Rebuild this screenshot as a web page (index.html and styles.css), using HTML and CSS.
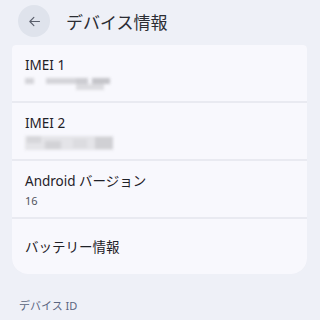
FILE: index.html
```html
<!DOCTYPE html>
<html lang="ja">
<head>
  <meta charset="UTF-8">
  <meta name="viewport" content="width=device-width, initial-scale=1.0">
  <title>デバイス情報</title>
  <link rel="stylesheet" href="styles.css">
</head>
<body>
  <div class="header">
    <div class="back">
      <svg width="15" height="15" viewBox="0 0 24 24"><path d="M20 12H5M11 5.5L4.5 12l6.5 6.5" fill="none" stroke="#5a5f6b" stroke-width="1.8" stroke-linecap="round" stroke-linejoin="round"/></svg>
    </div>
    <h1>デバイス情報</h1>
  </div>

  <div class="card">
    <div class="row">
      <div class="title">IMEI 1</div>
      <div class="blur">
        <span style="width:9px"></span><span style="width:30px;margin-left:12px"></span><span style="width:12px;background:#ccccd1"></span><span style="width:18px;margin-left:4px;background:#c4c4c9"></span>
        <span class="second" style="width:28px;left:51px"></span>
      </div>
    </div>
    <div class="row">
      <div class="title">IMEI 2</div>
      <div class="blur wide">
        <span style="left:2px;top:0;width:14px;height:7px;background:#d6d6da"></span>
        <span style="left:20px;top:5px;width:16px;height:8px;background:#d2d2d6"></span>
        <span style="left:48px;top:3px;width:14px;height:9px;background:#dcdce0"></span>
        <span style="left:70px;top:1px;width:18px;height:12px;background:#d0d0d4"></span>
      </div>
    </div>
    <div class="row">
      <div class="title">Android バージョン</div>
      <div class="value">16</div>
    </div>
    <div class="row single">
      <div class="title">バッテリー情報</div>
    </div>
  </div>

  <div class="section">デバイス ID</div>
</body>
</html>
```

FILE: styles.css
```css
body {
  margin: 0;
  background: #eef0f7;
  font-family: "Noto Sans", "Noto Sans CJK JP", sans-serif;
  color: #1f2128;
  width: 320px;
  height: 320px;
  overflow: hidden;
}
.header {
  display: flex;
  align-items: center;
  height: 42px;
  padding-left: 18px;
}
.back {
  width: 32px;
  height: 32px;
  border-radius: 50%;
  background: #dfe3ec;
  display: flex;
  align-items: center;
  justify-content: center;
}
.header h1 {
  margin: 0 0 0 16px;
  font-size: 17px;
  font-weight: 400;
  color: #2b2d33;
}
.card {
  margin: 3px 13px 0 12px;
  border-radius: 4px 4px 16px 16px;
  background: #e9eaf1;
  display: flex;
  flex-direction: column;
  gap: 2px;
  overflow: hidden;
}
.row {
  background: #f8f8fd;
  height: 56px;
  padding: 11px 0 0 13px;
  box-sizing: border-box;
}
.row.single {
  display: flex;
  align-items: center;
  padding-top: 0;
  height: 55px;
}
.title {
  font-size: 13.5px;
  line-height: 18px;
}
.value {
  font-size: 11px;
  color: #50535c;
  margin-top: 3px;
}
.blur {
  margin-top: 4px;
  height: 14px;
  position: relative;
  display: flex;
  align-items: flex-start;
  filter: blur(1.6px);
}
.blur span {
  height: 6px;
  background: #d4d4d9;
}
.blur .second {
  position: absolute;
  top: 6px;
  height: 6px;
  background: #dcdce0;
}
.blur.wide {
  width: 88px;
  height: 14px;
  background: #e4e4e8;
}
.blur.wide span {
  position: absolute;
}
.section {
  margin: 23px 0 0 19px;
  font-size: 11px;
  color: #5a6580;
}
```
